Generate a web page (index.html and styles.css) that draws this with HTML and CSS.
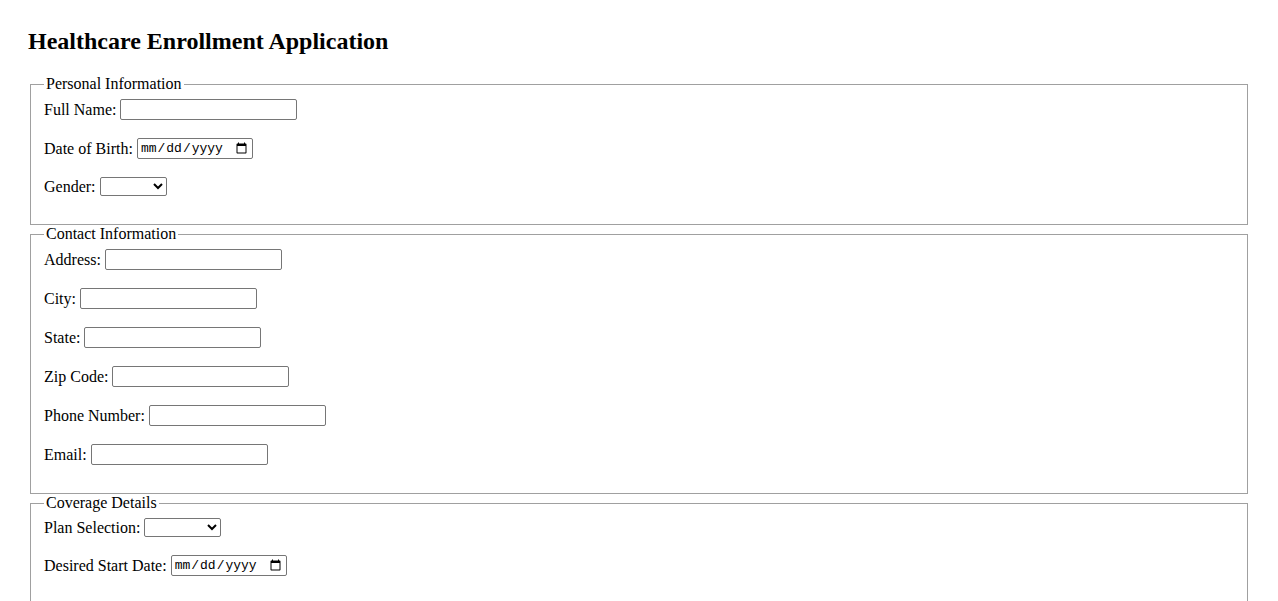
FILE: index.html
```html
<!DOCTYPE html>
<html lang="en">
<head>
  <meta charset="UTF-8">
  <title>Healthcare Enrollment Application</title>
  <meta name="viewport" content="width=device-width, initial-scale=1.0">
  <link rel="stylesheet" href="styles.css">
</head>
<body>

<h2>Healthcare Enrollment Application</h2>

<form id="enrollForm">
  <!-- Personal -->
  <fieldset>
    <legend>Personal Information</legend>
    <div class="field">
      <label for="fullName">Full Name:</label>
      <input type="text" id="fullName" name="fullName">
    </div>
    <div class="field">
      <label for="dob">Date of Birth:</label>
      <input type="date" id="dob" name="dob">
    </div>
    <div class="field">
      <label for="gender">Gender:</label>
      <select id="gender" name="gender" class="gender-select">
        <option value=""></option>
        <option>Male</option>
        <option>Female</option>
        <option>Other</option>
      </select>
    </div>
  </fieldset>

  <!-- Contact -->
  <fieldset>
    <legend>Contact Information</legend>
    <div class="field">
      <label for="address">Address:</label>
      <input type="text" id="address" name="address">
    </div>
    <div class="field">
      <label for="city">City:</label>
      <input type="text" id="city" name="city">
    </div>
    <div class="field">
      <label for="state">State:</label>
      <input type="text" id="state" name="state">
    </div>
    <div class="field">
      <label for="zip">Zip Code:</label>
      <input type="text" id="zip" name="zip">
    </div>
    <div class="field">
      <label for="phone">Phone Number:</label>
      <input type="tel" id="phone" name="phone">
    </div>
    <div class="field">
      <label for="email">Email:</label>
      <input type="email" id="email" name="email">
    </div>
  </fieldset>

  <!-- Coverage -->
  <fieldset>
    <legend>Coverage Details</legend>
    <div class="field">
      <label for="plan">Plan Selection:</label>
      <select id="plan" name="plan" class="plan-select">
        <option value=""></option>
        <option>Basic</option>
        <option>Standard</option>
        <option>Premium</option>
      </select>
    </div>
    <div class="field">
      <label for="startDate">Desired Start Date:</label>
      <input type="date" id="startDate" name="startDate">
    </div>
  </fieldset>

  <button type="submit">Submit Application</button>
</form>

</body>
</html>
```

FILE: styles.css
```css
body {
  font-family: "Liberation Serif", "Times New Roman", serif;
  font-size: 16px;
  color: #000;
  background: #fff;
  padding: 20px;
}

h2 {
  font-size: 24px;
  margin-top: 0;
  margin-bottom: 20px;
}

fieldset {
  margin: 0 2px;
  border: 1px solid #a0a0a0;
  padding: 6px 13px 10px;
}

legend {
  padding: 0 2px;
}

.field {
  display: flex;
  align-items: center;
  gap: 4px;
  margin-bottom: 18px;
}

input, select {
  font-family: "Liberation Sans", Arial, sans-serif;
  font-size: 13.333px;
  border: 1px solid #767676;
  border-radius: 2px;
  box-sizing: border-box;
  margin: 0;
}

input[type="text"], input[type="tel"], input[type="email"] {
  width: 177px;
  height: 21px;
}

input[type="date"] {
  font-family: "Liberation Mono", monospace;
  font-size: 13px;
  width: 116px;
  height: 21px;
  padding: 1px 2px;
}

select {
  height: 19px;
  background: #fff;
}

.gender-select { width: 67px; }
.plan-select { width: 77px; }

button {
  margin-top: 16px;
}
```
